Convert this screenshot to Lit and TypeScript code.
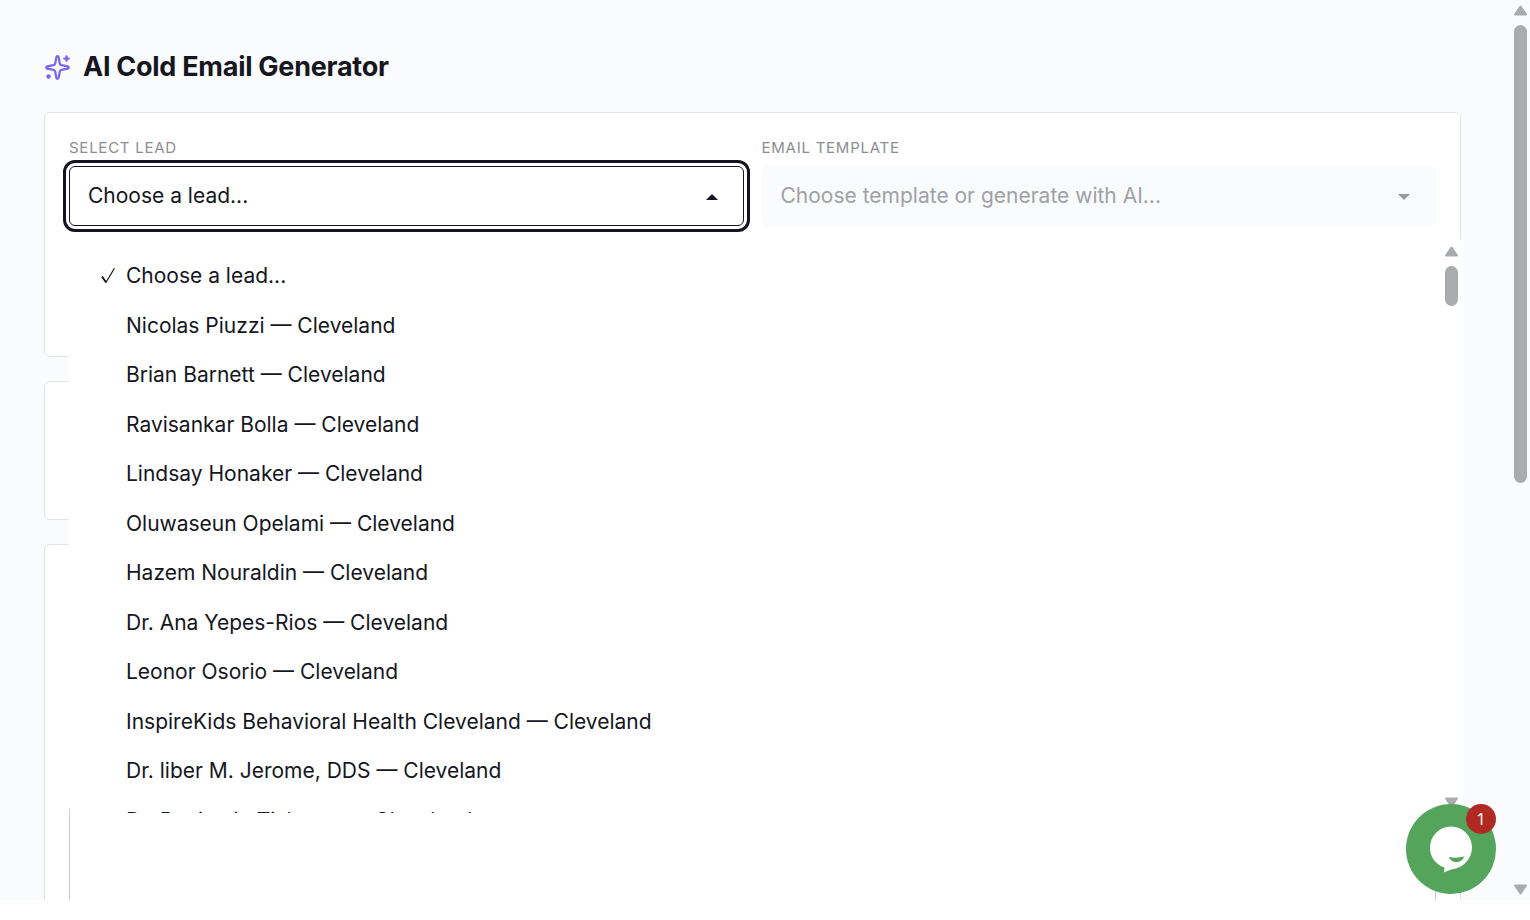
import { LitElement, html, css, svg } from "lit";
import { customElement, property, state } from "lit/decorators.js";

const LEADS = [
  "Choose a lead...",
  "Nicolas Piuzzi — Cleveland",
  "Brian Barnett — Cleveland",
  "Ravisankar Bolla — Cleveland",
  "Lindsay Honaker — Cleveland",
  "Oluwaseun Opelami — Cleveland",
  "Hazem Nouraldin — Cleveland",
  "Dr. Ana Yepes-Rios — Cleveland",
  "Leonor Osorio — Cleveland",
  "InspireKids Behavioral Health Cleveland — Cleveland",
  "Dr. liber M. Jerome, DDS — Cleveland",
  "Dr. Benjamin Tishman — Cleveland",
];

const arrowUp = svg`<path d="M6.500 1.5 L12 9.5 H1 Z" fill="currentColor" stroke="currentColor" stroke-width="2" stroke-linejoin="round"/>`;
const arrowDown = svg`<path d="M6.500 9.5 L12 1.5 H1 Z" fill="currentColor" stroke="currentColor" stroke-width="2" stroke-linejoin="round"/>`;

/* Vertical scrollbar track with end arrows and a rounded thumb. */
@customElement("scroll-track")
export class ScrollTrack extends LitElement {
  @property({ type: Number }) size = 50;

  static styles = css`
    :host {
      display: flex;
      flex-direction: column;
      align-items: center;
      gap: 9px;
      color: #a9abad;
    }
    svg {
      display: block;
      flex: none;
      width: 13px;
      height: 11px;
    }
    .lane {
      flex: 1;
      min-height: 0;
    }
    .thumb {
      width: 13px;
      border-radius: 7px;
      background: #a9acad;
    }
  `;

  render() {
    return html`
      <svg viewBox="0 0 13 11" aria-hidden="true">${arrowUp}</svg>
      <div class="lane"><div class="thumb" style="height:${this.size}%"></div></div>
      <svg viewBox="0 0 13 11" aria-hidden="true">${arrowDown}</svg>
    `;
  }
}

@customElement("app-root")
export class AppRoot extends LitElement {
  @state() private selected = 0;

  static styles = css`
    :host {
      display: block;
      font-family: Inter, "Liberation Sans", sans-serif;
      font-size: 21px;
      color: #15161e;
    }
    * {
      box-sizing: border-box;
    }
    .page {
      position: relative;
      display: flex;
      height: calc(100vh - 20px);
      overflow: hidden;
      background: #fafbfd;
    }
    main {
      flex: 1;
      min-width: 0;
      display: flex;
      flex-direction: column;
      gap: 24px;
      padding: 46px 50px 0 44px;
    }
    .page-scroll {
      flex: none;
      width: 19px;
      padding: 5px 0;
    }
    header {
      display: flex;
      align-items: center;
      gap: 12px;
      height: 42px;
    }
    .spark {
      width: 27px;
      height: 27px;
      color: #7c66ee;
    }
    h1 {
      margin: 0;
      font-size: 27px;
      line-height: 40px;
      font-weight: 700;
      letter-spacing: -0.01em;
    }
    .card {
      flex: none;
      background: #fff;
      border: 1px solid #e4e5e8;
      border-radius: 6px;
      padding: 24px;
    }
    .setup {
      min-height: 245px;
    }
    .context {
      min-height: 139px;
    }
    .compose {
      flex: 1;
      display: flex;
      border-bottom: 0;
      border-radius: 6px 6px 0 0;
      padding-bottom: 0;
    }
    .fields {
      position: relative;
      display: grid;
      grid-template-columns: 1fr 1fr;
      gap: 18px;
    }
    label {
      display: block;
      font-size: 15px;
      line-height: 22px;
      letter-spacing: 0.05em;
      text-transform: uppercase;
      color: #8c8d92;
      margin-bottom: 7px;
    }
    .control {
      display: grid;
      align-items: center;
    }
    .control > * {
      grid-area: 1 / 1;
    }
    select {
      appearance: none;
      width: 100%;
      height: 60px;
      margin: 0;
      padding: 0 18px 2px;
      border: 1px solid #15161e;
      border-radius: 6px;
      background: #fff;
      color: inherit;
      font: inherit;
      opacity: 1;
    }
    .open {
      outline: 3px solid #15131f;
      outline-offset: 3px;
    }
    select:disabled {
      border-color: #fafbfd;
      background: #fafbfd;
      color: #a0a1a5;
    }
    .caret {
      justify-self: end;
      width: 12px;
      height: 6px;
      margin: 2px 26px 0 0;
      pointer-events: none;
    }
    .muted {
      color: #97989b;
    }
    .popup {
      position: absolute;
      z-index: 2;
      top: calc(100% + 13px);
      left: 0;
      right: -28px;
      height: 574px;
      display: flex;
      overflow: hidden;
      background: #fff;
      border-radius: 6px;
    }
    .options {
      flex: 1;
      display: grid;
      grid-auto-rows: 1fr;
      height: 594px;
      margin: 12px 0 0;
      padding: 0;
      list-style: none;
    }
    .option {
      display: grid;
      grid-template-columns: 15px 1fr;
      align-items: center;
      gap: 11px;
      padding-left: 31px;
      white-space: nowrap;
      cursor: default;
    }
    .check {
      width: 15px;
      height: 17px;
    }
    .popup-scroll {
      width: 13px;
      margin: 7px 6px 5px;
    }
    textarea {
      flex: 1;
      border: 1px solid #c9cacd;
      border-bottom: 0;
      border-radius: 6px 6px 0 0;
      background: #fff;
      resize: none;
      font: inherit;
      margin: 60px 0 0;
    }
    .chat {
      position: absolute;
      z-index: 3;
      right: 34px;
      bottom: 6px;
      width: 90px;
      height: 90px;
      padding: 0;
      border: 0;
      border-radius: 50%;
      background: #54a55b;
      font: inherit;
    }
    .bubble {
      display: block;
      width: 90px;
      height: 90px;
    }
    .badge {
      position: absolute;
      top: 0;
      right: 0;
      width: 30px;
      height: 30px;
      border-radius: 50%;
      background: #b02a23;
      color: #fff;
      font: 17px/30px "Open Sans", "Noto Sans", sans-serif;
      text-align: center;
    }
  `;

  private renderOption(name: string, index: number) {
    const on = index === this.selected;
    return html`
      <li class="option" role="option" aria-selected=${on} @click=${() => (this.selected = index)}>
        <svg class="check" viewBox="0 0 15 17" fill="none" aria-hidden="true">
          ${on
            ? svg`<path d="M2 10 L6 15.2 L14.4 1.2" stroke="currentColor" stroke-width="1.2"/><path d="M2 9.600 L6 15.2" stroke="currentColor" stroke-width="1.8"/>`
            : ""}
        </svg>
        <span>${name}</span>
      </li>
    `;
  }

  render() {
    return html`
      <div class="page">
        <main>
          <header>
            <svg class="spark" viewBox="0 0 24 24" fill="none" stroke="currentColor" stroke-width="2" stroke-linecap="round" stroke-linejoin="round" aria-hidden="true">
              <path d="M11.017 2.814a1 1 0 0 1 1.966 0l1.051 5.558a2 2 0 0 0 1.594 1.594l5.558 1.051a1 1 0 0 1 0 1.966l-5.558 1.051a2 2 0 0 0-1.594 1.594l-1.051 5.558a1 1 0 0 1-1.966 0l-1.051-5.558a2 2 0 0 0-1.594-1.594l-5.558-1.051a1 1 0 0 1 0-1.966l5.558-1.051a2 2 0 0 0 1.594-1.594z" />
              <path d="M20 2v4" />
              <path d="M22 4h-4" />
              <circle cx="4" cy="20" r="1" />
            </svg>
            <h1>AI Cold Email Generator</h1>
          </header>
          <section class="card setup">
            <div class="fields">
              <div>
                <label for="lead">Select lead</label>
                <div class="control">
                  <select id="lead" class="open">
                    <option>${LEADS[this.selected]}</option>
                  </select>
                  <svg class="caret" viewBox="0 0 12 6" aria-hidden="true"><path d="M6 0 L12 6 H0 Z" fill="currentColor" /></svg>
                </div>
              </div>
              <div>
                <label for="template">Email template</label>
                <div class="control">
                  <select id="template" disabled>
                    <option>Choose template or generate with AI...</option>
                  </select>
                  <svg class="caret muted" viewBox="0 0 12 6" aria-hidden="true"><path d="M0 0 H12 L6 6 Z" fill="currentColor" /></svg>
                </div>
              </div>
              <div class="popup">
                <ul class="options" role="listbox" aria-label="Select lead">
                  ${LEADS.map((name, i) => this.renderOption(name, i))}
                </ul>
                <scroll-track class="popup-scroll" .size=${7.7}></scroll-track>
              </div>
            </div>
          </section>
          <section class="card context"></section>
          <section class="card compose">
            <textarea aria-label="Email body"></textarea>
          </section>
        </main>
        <scroll-track class="page-scroll" .size=${53.9}></scroll-track>
        <button class="chat" aria-label="Open chat, 1 unread message">
          <svg class="bubble" viewBox="0 0 90 90" aria-hidden="true">
            <path d="M45 22.5 A21 21 0 0 1 66 43.500 C66 54 58.500 62 50 64.500 C45 65.500 41.500 66.500 38 68.500 L38.500 63.500 C29.500 60.500 24 53 24 43.500 A21 21 0 0 1 45 22.500 Z" fill="#fff" />
            <path d="M43 53 Q50.500 54.500 58 52.500 C57 56.500 54 58 50.500 58 C47 58 44 56.500 43 53 Z" fill="#54a55b" />
          </svg>
          <span class="badge">1</span>
        </button>
      </div>
    `;
  }
}
